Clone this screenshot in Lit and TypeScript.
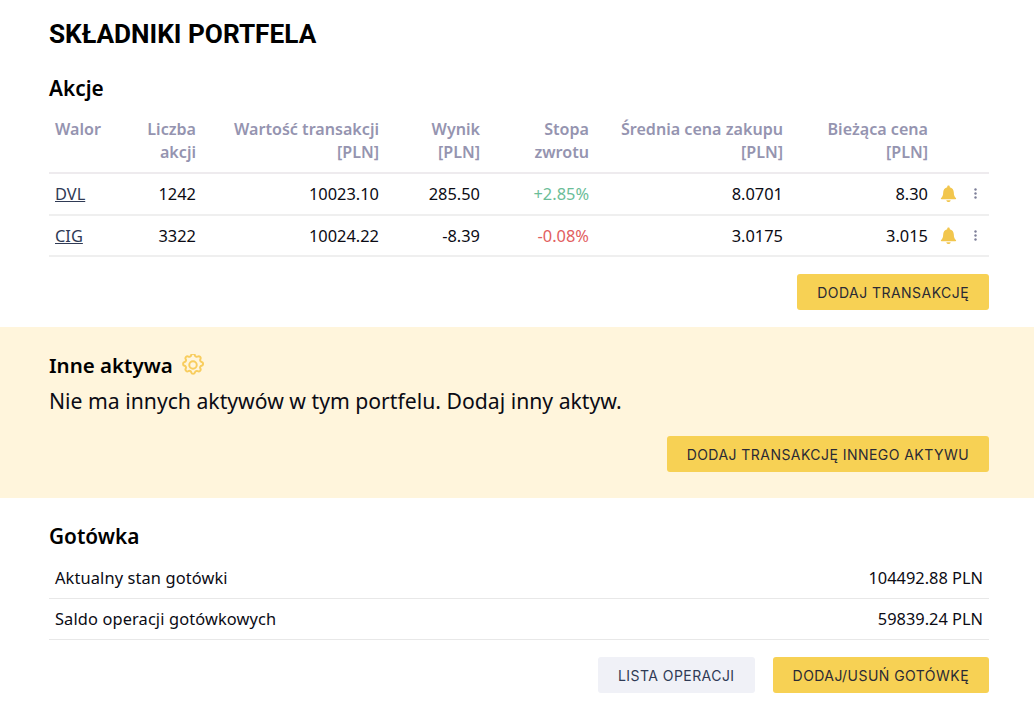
import { LitElement, html, css, svg } from 'lit';
import { customElement } from 'lit/decorators.js';

const stocks = [
  { name: 'DVL', count: '1242', value: '10023.10', result: '285.50', rate: '+2.85%', up: true, avg: '8.0701', price: '8.30' },
  { name: 'CIG', count: '3322', value: '10024.22', result: '-8.39', rate: '-0.08%', up: false, avg: '3.0175', price: '3.015' },
];

const bell = svg`<path d="M8 0.4c-.7 0-1.2.5-1.2 1.2v.5C4.500 2.600 3 4.600 3 7c0 2.900-.9 4.200-2 5.300-.4.4-.1 1 .4 1h13.200c.5 0 .8-.6.4-1-1.100-1.100-2-2.400-2-5.300 0-2.400-1.500-4.400-3.800-4.900v-.5C9.200.9 8.700.4 8 .4z"/><path d="M6 14.300h4c0 1.100-.9 1.700-2 1.700s-2-.6-2-1.700z"/>`;

@customElement('app-root')
export class AppRoot extends LitElement {
  static styles = css`
    :host {
      display: block;
      height: 720px;
      overflow: hidden;
      background: #fff;
      color: #0b0b14;
      font-family: 'Noto Sans', sans-serif;
      font-size: 16.4px;
    }
    .section {
      padding: 0 45px 0 49px;
    }
    h1 {
      margin: 0;
      padding-top: 15px;
      height: 39px;
      font-family: 'Roboto', sans-serif;
      font-size: 26.2px;
      line-height: 39px;
      font-weight: 700;
      color: #000;
    }
    h2 {
      margin: 0;
      font-size: 20.8px;
      line-height: 28px;
      font-weight: 600;
      color: #000;
    }
    .stocks h2 {
      padding-top: 20px;
    }
    .grid {
      display: grid;
      grid-template-columns: 75px 78px 183px 101px 109px 194px 145px 55px;
      margin-top: 15px;
    }
    .head {
      padding: 1px 6px 8px;
      font-size: 16.1px;
      line-height: 23px;
      font-weight: 600;
      color: #9594b0;
      text-align: right;
      border-bottom: 2px solid #eeebee;
    }
    .cell {
      display: flex;
      align-items: center;
      justify-content: flex-end;
      height: 39.5px;
      padding: 0 6px;
      border-bottom: 2px solid #efefef;
    }
    .left {
      text-align: left;
      justify-content: flex-start;
    }
    a {
      color: #2f3a55;
      text-decoration: underline;
    }
    .up {
      color: #6bbd98;
    }
    .down {
      color: #e2605f;
    }
    .actions {
      justify-content: flex-start;
      padding: 0 0 0 6px;
    }
    .bell {
      width: 17px;
      height: 17px;
      fill: #f2c64d;
    }
    .dots {
      width: 3px;
      height: 11px;
      margin-left: 17px;
      fill: #7d7f99;
    }
    .buttons {
      display: flex;
      justify-content: flex-end;
      gap: 18px;
    }
    button {
      height: 36px;
      padding: 0 20px;
      border: 0;
      border-radius: 3px;
      background: #f7d154;
      color: #2a2a35;
      font-family: 'Inter', sans-serif;
      font-size: 14px;
      font-weight: 400;
      letter-spacing: 0.45px;
    }
    button.muted {
      background: #f0f1f7;
      color: #2f3a55;
    }
    .stocks .buttons {
      margin-top: 17px;
      padding-bottom: 17px;
    }
    .other {
      background: #fff5dc;
      height: 171px;
      box-sizing: border-box;
      padding-top: 24px;
    }
    .title {
      display: flex;
      align-items: center;
      gap: 9px;
    }
    .title h2 {
      font-size: 20.5px;
    }
    .gear {
      width: 22px;
      height: 22px;
      fill: none;
      stroke: #f8cd5e;
      stroke-width: 1.8;
    }
    .other p {
      margin: 8px 0 0;
      font-size: 21.2px;
      line-height: 28px;
      color: #0b0b14;
    }
    .other .buttons {
      margin-top: 21px;
    }
    .cash {
      padding-top: 24px;
    }
    .rows {
      margin-top: 8px;
    }
    .row {
      display: flex;
      justify-content: space-between;
      align-items: center;
      height: 39px;
      padding: 0 6px 1px;
      border-bottom: 1px solid #e8e8e8;
    }
    .label {
      letter-spacing: 0.12px;
    }
    .cash .buttons {
      margin-top: 17px;
    }
  `;

  render() {
    return html`
      <div class="section stocks">
        <h1>SKŁADNIKI PORTFELA</h1>
        <h2>Akcje</h2>
        <div class="grid">
          <div class="head left">Walor</div>
          <div class="head">Liczba<br />akcji</div>
          <div class="head">Wartość transakcji<br />[PLN]</div>
          <div class="head">Wynik<br />[PLN]</div>
          <div class="head">Stopa<br />zwrotu</div>
          <div class="head">Średnia cena zakupu<br />[PLN]</div>
          <div class="head">Bieżąca cena<br />[PLN]</div>
          <div class="head"></div>
          ${stocks.map(
            (s) => html`
              <div class="cell left"><a href="#">${s.name}</a></div>
              <div class="cell">${s.count}</div>
              <div class="cell">${s.value}</div>
              <div class="cell">${s.result}</div>
              <div class="cell ${s.up ? 'up' : 'down'}">${s.rate}</div>
              <div class="cell">${s.avg}</div>
              <div class="cell">${s.price}</div>
              <div class="cell actions">
                <svg class="bell" viewBox="0 0 16 16">${bell}</svg>
                <svg class="dots" viewBox="0 0 3 11">
                  <circle cx="1.500" cy="1.500" r="1.200"></circle>
                  <circle cx="1.500" cy="5.500" r="1.200"></circle>
                  <circle cx="1.500" cy="9.500" r="1.200"></circle>
                </svg>
              </div>
            `
          )}
        </div>
        <div class="buttons"><button>DODAJ TRANSAKCJĘ</button></div>
      </div>
      <div class="section other">
        <div class="title">
          <h2>Inne aktywa</h2>
          <svg class="gear" viewBox="2 1.500 20 20">
            <path d="M10.300 2.700c.4-1.800 3-1.800 3.400 0a1.700 1.700 0 0 0 2.600 1.100c1.500-.9 3.300.8 2.400 2.400a1.700 1.700 0 0 0 1.100 2.500c1.800.4 1.800 3 0 3.400a1.700 1.700 0 0 0-1.100 2.600c.9 1.500-.8 3.300-2.400 2.400a1.700 1.700 0 0 0-2.500 1.100c-.4 1.800-3 1.800-3.400 0a1.700 1.700 0 0 0-2.600-1.100c-1.500.9-3.300-.8-2.400-2.400a1.700 1.700 0 0 0-1.100-2.500c-1.800-.4-1.800-3 0-3.400a1.700 1.700 0 0 0 1.100-2.600c-.9-1.500.8-3.300 2.400-2.400 1 .6 2.300.1 2.500-1.100z"></path>
            <circle cx="12" cy="11.500" r="3.400"></circle>
          </svg>
        </div>
        <p>Nie ma innych aktywów w tym portfelu. Dodaj inny aktyw.</p>
        <div class="buttons"><button>DODAJ TRANSAKCJĘ INNEGO AKTYWU</button></div>
      </div>
      <div class="section cash">
        <h2>Gotówka</h2>
        <div class="rows">
          <div class="row"><span class="label">Aktualny stan gotówki</span><span>104492.88 PLN</span></div>
          <div class="row"><span class="label">Saldo operacji gotówkowych</span><span>59839.24 PLN</span></div>
        </div>
        <div class="buttons">
          <button class="muted">LISTA OPERACJI</button>
          <button>DODAJ/USUŃ GOTÓWKĘ</button>
        </div>
      </div>
    `;
  }
}
